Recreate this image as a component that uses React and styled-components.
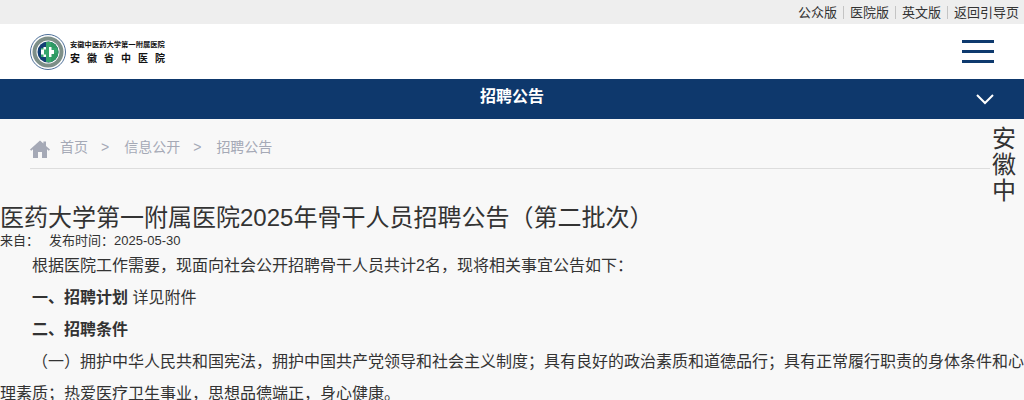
import React from 'react'
import styled, { createGlobalStyle } from 'styled-components'

const GlobalStyle = createGlobalStyle`
    html, body {
        margin: 0;
        padding: 0;
        background: #f8f8f8;
        overflow: hidden;
        font-family: "Liberation Sans", "Noto Sans CJK SC", sans-serif;
        color: #333;
    }
`

const topLinks = ['公众版', '医院版', '英文版', '返回引导页']

function App() {
    return (
        <Container>
            <GlobalStyle />
            <TopBar>
                {topLinks.map((link) => (
                    <TopLink key={link}>{link}</TopLink>
                ))}
            </TopBar>
            <Header>
                <Logo>
                    <svg width="36" height="36" viewBox="0 0 36 36">
                        <circle cx="18" cy="18" r="17.5" fill="#fff" stroke="#1f4a7d" strokeWidth="0.8" />
                        <circle cx="18" cy="18" r="15.5" fill="#7d8f88" />
                        <circle cx="18" cy="18" r="11.5" fill="#fff" />
                        <circle cx="18" cy="18" r="10.5" fill="#123f74" />
                        <path d="M18 7.5a10.5 10.5 0 0 1 0 21z" fill="#2f9a63" />
                        <path d="M16 8h5v6h6v5h-6v9h-5v-5h-5v-9h5z" fill="#36a56d" />
                        <path d="M16 13h-2.5v2.5H11v5h2.5V23H16v-2.5h-2v-5h2z" fill="#fff" />
                        <path d="M19 13h2.5v3H24v4h-2.5v3H19z" fill="#fff" />
                    </svg>
                    <LogoText>
                        <LogoLine>安徽中医药大学第一附属医院</LogoLine>
                        <LogoLine $wide>安徽省中医院</LogoLine>
                    </LogoText>
                </Logo>
                <MenuButton>
                    <span />
                    <span />
                    <span />
                </MenuButton>
            </Header>
            <NavBar>
                招聘公告
                <NavArrow width="20" height="12" viewBox="0 0 20 12">
                    <path d="M2 2l8 8 8-8" fill="none" stroke="#fff" strokeWidth="2" />
                </NavArrow>
            </NavBar>
            <Main>
                <TopSection>
                    <LeftColumn>
                        <Breadcrumb>
                            <HomeIcon width="20" height="18" viewBox="0 0 20 18">
                                <path d="M10 0.5L0 9.5l1.2 1.2L3 9.2V18h5v-6h4v6h5V9.2l1.8 1.5L20 9.5l-4-3.6V1.5h-2.6v2z" fill="#a5a9b6" />
                            </HomeIcon>
                            <Crumb>首页</Crumb>
                            <Sep>&gt;</Sep>
                            <Crumb>信息公开</Crumb>
                            <Sep>&gt;</Sep>
                            <Crumb>招聘公告</Crumb>
                        </Breadcrumb>
                        <Title>医药大学第一附属医院2025年骨干人员招聘公告（第二批次）</Title>
                    </LeftColumn>
                    <SideName>安徽中</SideName>
                </TopSection>
                <Meta>
                    <span>来自：</span>
                    <span>发布时间：2025-05-30</span>
                </Meta>
                <Article>
                    <Paragraph $indent>根据医院工作需要，现面向社会公开招聘骨干人员共计2名，现将相关事宜公告如下：</Paragraph>
                    <Paragraph $indent><b>一、招聘计划</b> 详见附件</Paragraph>
                    <Paragraph $indent><b>二、招聘条件</b></Paragraph>
                    <Paragraph $indent>（一）拥护中华人民共和国宪法，拥护中国共产党领导和社会主义制度；具有良好的政治素质和道德品行；具有正常履行职责的身体条件和心理素质；热爱医疗卫生事业，思想品德端正，身心健康。</Paragraph>
                </Article>
            </Main>
        </Container>
    )
}

const Container = styled.div`
    width: 1024px;
    height: 400px;
    overflow: hidden;
    background: #f8f8f8;
`

const TopBar = styled.div`
    height: 24px;
    background: #eeeeee;
    display: flex;
    justify-content: flex-end;
    align-items: center;
`

const TopLink = styled.a`
    font-size: 13px;
    line-height: 13px;
    color: #333;
    padding: 0 6px;
    border-left: 1px solid #c4c4c4;

    &:first-child {
        border-left: 0;
    }

    &:last-child {
        padding-right: 5px;
    }
`

const Header = styled.div`
    height: 55px;
    background: #fff;
    display: flex;
    justify-content: space-between;
    align-items: center;
    padding: 0 30px;
`

const Logo = styled.div`
    display: flex;
    align-items: center;
    gap: 4px;
`

const LogoText = styled.div`
    display: flex;
    flex-direction: column;
    gap: 3px;
`

const LogoLine = styled.div`
    font-size: ${(p) => (p.$wide ? '10px' : '7.3px')};
    line-height: 11px;
    font-weight: 700;
    color: #111;
    white-space: nowrap;
    letter-spacing: ${(p) => (p.$wide ? '7px' : '0')};
`

const MenuButton = styled.div`
    width: 32px;
    display: flex;
    flex-direction: column;
    gap: 7px;

    span {
        display: block;
        height: 3px;
        background: #0e3a6e;
    }
`

const NavBar = styled.div`
    position: relative;
    height: 40px;
    line-height: 36px;
    background: #0e386c;
    text-align: center;
    color: #fff;
    font-size: 16px;
    font-weight: 700;
`

const NavArrow = styled.svg`
    position: absolute;
    right: 29px;
    top: 14px;
`

const Main = styled.div`
    background: #f8f8f8;
`

const TopSection = styled.div`
    display: flex;
`

const LeftColumn = styled.div`
    width: 990px;
    flex: none;
`

const Breadcrumb = styled.div`
    height: 50px;
    margin-left: 30px;
    padding-top: 5px;
    box-sizing: border-box;
    display: flex;
    align-items: center;
    border-bottom: 1px solid #dddddd;
    color: #a5a9b6;
    font-size: 14px;
`

const HomeIcon = styled.svg`
    margin-top: 5px;
`

const Crumb = styled.span`
    margin-left: 10px;
`

const Sep = styled.span`
    margin: 2px 5px 0 13px;
`

const Title = styled.h1`
    margin: 35px 0 0;
    font-size: 24px;
    line-height: 28px;
    font-weight: 400;
    color: #333;
    white-space: nowrap;
`

const SideName = styled.div`
    width: 24px;
    margin: 7px 0 0 2px;
    font-size: 24px;
    line-height: 26px;
    color: #333;
`

const Meta = styled.div`
    display: flex;
    gap: 10px;
    font-size: 13px;
    line-height: 17px;
    color: #333;
`

const Article = styled.div`
    font-size: 16px;
    line-height: 32px;
    margin-top: 1px;
    color: #333;
`

const Paragraph = styled.p`
    margin: 0;
    text-indent: ${(p) => (p.$indent ? '32px' : '0')};
`

export default App
